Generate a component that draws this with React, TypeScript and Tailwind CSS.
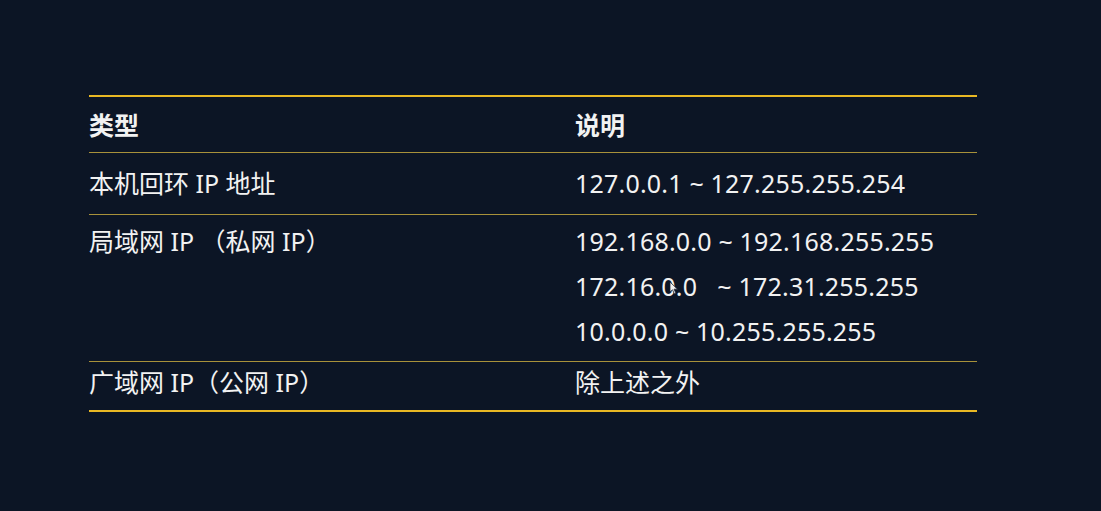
const rows = [
  { type: "本机回环 IP 地址", desc: ["127.0.0.1 ~ 127.255.255.254"] },
];

function Line({ strong }: { strong?: boolean }) {
  return strong ? (
    <div className="h-[2px] w-full bg-[#e9b824]" />
  ) : (
    <div className="h-px w-full bg-[#a8913a]" />
  );
}

function Cursor() {
  return (
    <svg
      className="absolute left-[669px] top-[281px]"
      width="10"
      height="14"
      viewBox="0 0 10 14"
    >
      <path d="M1 1 L1 11 L3.5 8.8 L5.5 13 L7 12.3 L5 8.2 L8.5 8.2 Z" fill="#f0f0f0" stroke="#1a2233" strokeWidth="0.8" />
    </svg>
  );
}

export default function App() {
  return (
    <div
      className="relative h-[511px] w-[1101px] bg-[#0c1525] text-[25px] text-[#f2f2f2]"
      style={{ fontFamily: '"Noto Sans", "Noto Sans CJK SC", sans-serif' }}
    >
      <div className="w-[977px] pl-[89px] pt-[95px]">
        <Line strong />
        <div className="flex h-[55px] items-center pt-[3px] font-bold">
          <div className="w-[486px]">类型</div>
          <div>说明</div>
        </div>
        <Line />
        {rows.map((r) => (
          <div key={r.type} className="flex h-[61px] items-center">
            <div className="w-[486px]">{r.type}</div>
            <div className="tracking-[0.2px]">{r.desc[0]}</div>
          </div>
        ))}
        <Line />
        <div className="flex h-[146px] pt-[4px] leading-[45px]">
          <div className="w-[486px]">局域网 IP （私网 IP）</div>
          <div className="flex flex-col whitespace-pre tracking-[0.2px]">
            <span>192.168.0.0 ~ 192.168.255.255</span>
            <span>172.16.0.0   ~ 172.31.255.255</span>
            <span>10.0.0.0 ~ 10.255.255.255</span>
          </div>
        </div>
        <Line />
        <div className="flex h-[48px] items-center pb-[6px]">
          <div className="w-[486px]">广域网 IP（公网 IP）</div>
          <div>除上述之外</div>
        </div>
        <Line strong />
      </div>
      <Cursor />
    </div>
  );
}
